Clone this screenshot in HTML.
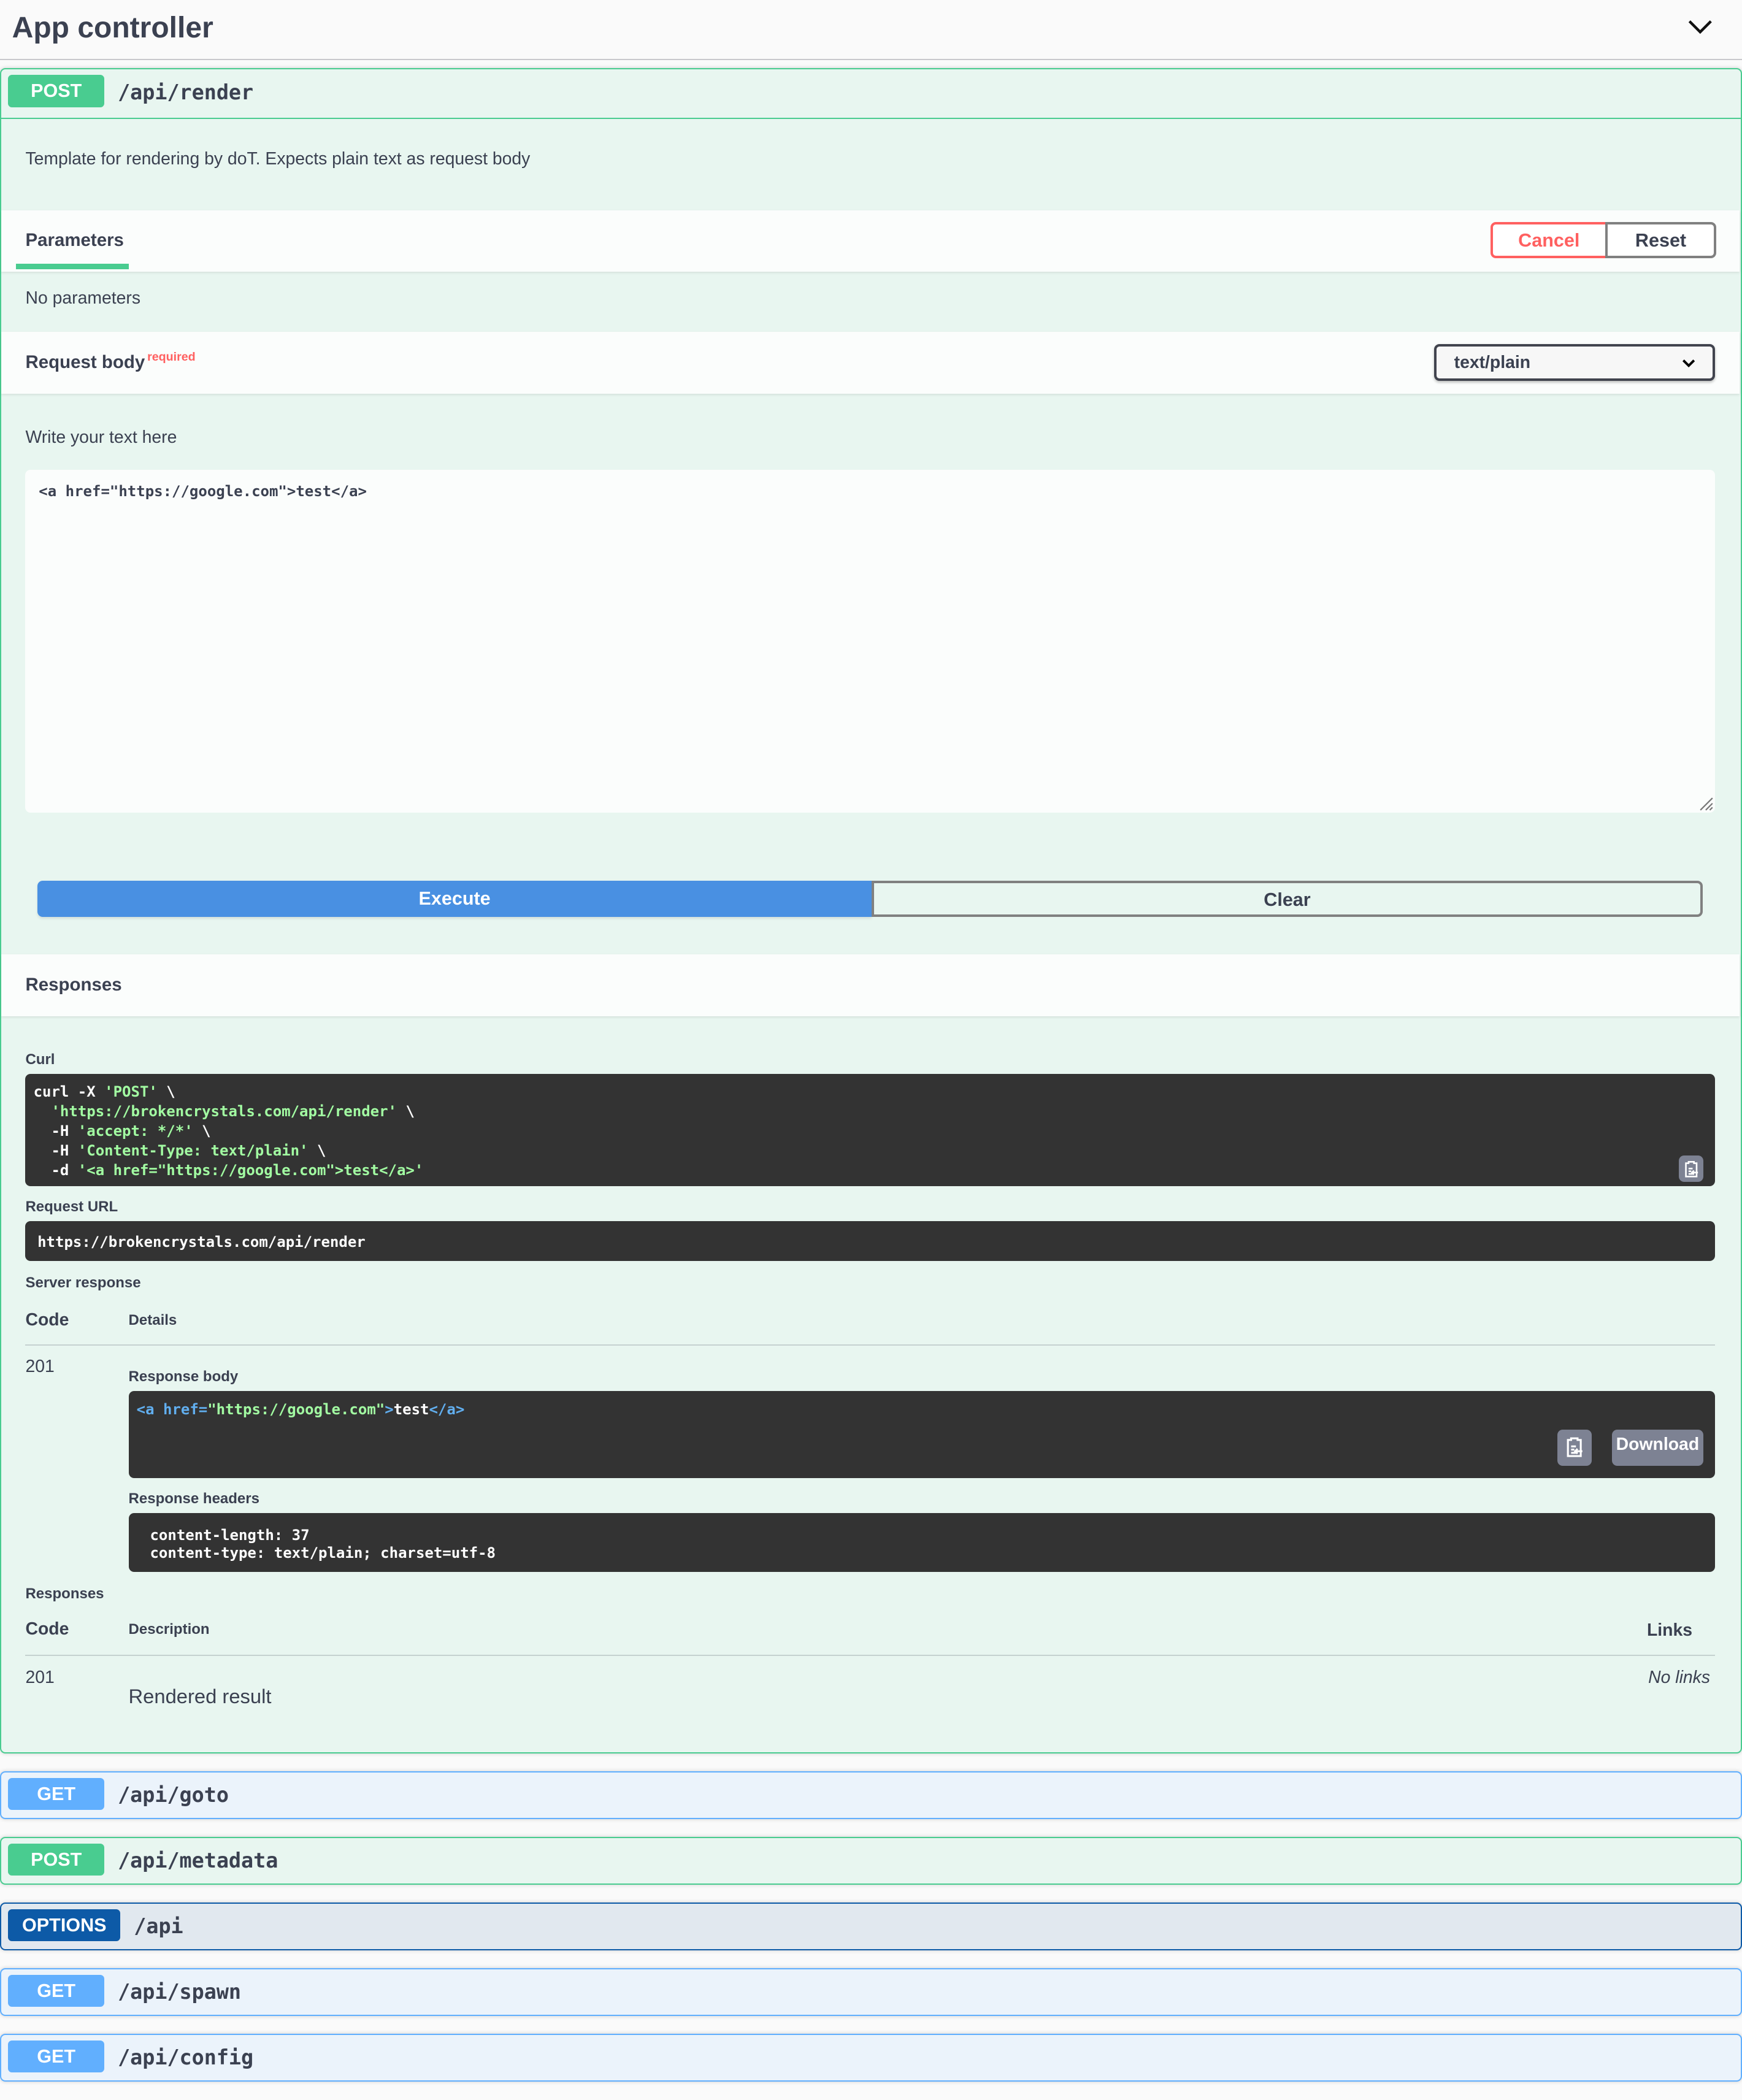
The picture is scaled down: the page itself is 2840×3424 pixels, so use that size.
<!DOCTYPE html>
<html><head><meta charset="utf-8">
<style>
html,body{margin:0;padding:0;background:#fafafa;}
body{width:2840px;height:3424px;overflow:hidden;}
#w{zoom:2.1829;width:1301px;height:1568px;position:relative;font-family:"Liberation Sans",sans-serif;color:#3b4151;}
.a{position:absolute;}
.t{position:absolute;white-space:pre;}
.mono{font-family:"DejaVu Sans Mono","Liberation Mono",monospace;}
.b{font-weight:bold;}
.badge{position:absolute;left:6px;height:24px;width:72px;border-radius:3px;color:#fff;font-weight:bold;font-size:14px;line-height:24px;text-align:center;}
.path{position:absolute;left:88px;font-family:"DejaVu Sans Mono",monospace;font-weight:bold;font-size:15.3px;color:#3b4151;}
.op{position:absolute;left:0;width:1299px;height:34px;border:1px solid;border-radius:4px;box-shadow:0 0 3px rgba(0,0,0,.19);}
.code{position:absolute;background:#333;border-radius:4px;color:#fff;font-family:"DejaVu Sans Mono",monospace;font-weight:bold;font-size:11px;}
.g{color:#a2fca2;}
.bar{position:absolute;left:1px;width:1298px;background:rgba(255,255,255,.8);box-shadow:0 1px 2px rgba(0,0,0,.1);}
</style></head><body><div id="w">
<div class="t b" style="left:9px;top:7px;font-size:22px;line-height:28px;">App controller</div>
<svg class="a" style="left:1260px;top:12px" width="20" height="16" viewBox="0 0 20 16"><path d="M2 4 L10 12 L18 4" fill="none" stroke="#111" stroke-width="2"/></svg>
<div class="a" style="left:0;top:44px;width:1301px;height:1px;background:#c8c8cc;"></div>

<div class="a" style="left:0;top:51px;width:1299px;height:1257px;border:1px solid #49cc90;border-radius:4px;background:#e8f6f0;box-shadow:0 0 3px rgba(0,0,0,.19);"></div>
<div class="a" style="left:1px;top:88px;width:1299px;height:1px;background:#49cc90;"></div>
<div class="badge" style="top:56px;background:#49cc90;">POST</div>
<div class="path" style="top:59px;line-height:20px;">/api/render</div>
<div class="t" style="left:19px;top:111px;font-size:13px;line-height:16px;">Template for rendering by doT. Expects plain text as request body</div>

<div class="bar" style="top:157px;height:46px;"></div>
<div class="t b" style="left:19px;top:172px;font-size:13.5px;line-height:16px;">Parameters</div>
<div class="a" style="left:12px;top:197px;width:84px;height:4px;background:#49cc90;"></div>
<div class="a" style="left:1113px;top:166px;width:84px;height:23px;border:2px solid #ff6060;border-radius:4px 0 0 4px;background:#fff;color:#ff6060;font-weight:bold;font-size:14px;line-height:24px;text-align:center;">Cancel</div>
<div class="a" style="left:1199px;top:166px;width:79px;height:23px;border:2px solid #808080;border-radius:0 4px 4px 0;background:#fff;font-weight:bold;font-size:14px;line-height:24px;text-align:center;">Reset</div>
<div class="t" style="left:19px;top:215px;font-size:13px;line-height:16px;">No parameters</div>

<div class="bar" style="top:248px;height:46px;"></div>
<div class="t b" style="left:19px;top:263px;font-size:13.5px;line-height:16px;">Request body</div>
<div class="t b" style="left:110px;top:262px;font-size:9px;line-height:10px;color:#ff6060;">required</div>
<div class="a" style="left:1071px;top:257px;width:206px;height:24px;border:2px solid #41444e;border-radius:4px;background:#f7f7f7;box-shadow:0 1px 2px rgba(0,0,0,.25);"></div>
<div class="t b" style="left:1086px;top:263px;font-size:13px;line-height:16px;">text/plain</div>
<svg class="a" style="left:1255px;top:266px" width="12" height="10" viewBox="0 0 12 10"><path d="M2 3 L6 7 L10 3" fill="none" stroke="#000" stroke-width="1.8"/></svg>

<div class="t" style="left:19px;top:319px;font-size:13px;line-height:16px;">Write your text here</div>
<div class="a" style="left:19px;top:351px;width:1262px;height:256px;background:#fbfdfc;border-radius:4px;"></div>
<div class="t mono b" style="left:29px;top:360px;font-size:11px;line-height:14px;">&lt;a href="https://google.com"&gt;test&lt;/a&gt;</div>
<svg class="a" style="left:1269px;top:595px" width="11" height="11" viewBox="0 0 11 11"><path d="M1 10 L10 1 M5 10 L10 5 M8 10 L10 8" stroke="#777" stroke-width="1"/></svg>

<div class="a" style="left:28px;top:658px;width:623px;height:27px;background:#4990e2;border-radius:4px 0 0 4px;color:#fff;font-weight:bold;font-size:14px;line-height:27px;text-align:center;box-shadow:0 1px 2px rgba(0,0,0,.1);">Execute</div>
<div class="a" style="left:651px;top:658px;width:617px;height:23px;border:2px solid #808080;border-radius:0 4px 4px 0;font-weight:bold;font-size:14px;line-height:25px;text-align:center;">Clear</div>

<div class="bar" style="top:713px;height:46px;"></div>
<div class="t b" style="left:19px;top:728px;font-size:13.5px;line-height:16px;">Responses</div>

<div class="t b" style="left:19px;top:785px;font-size:11px;line-height:13px;">Curl</div>
<div class="code" style="left:19px;top:802px;width:1262px;height:84px;"></div>
<div class="t mono b" style="left:25px;top:808px;font-size:11px;line-height:14.7px;color:#fff;">curl -X <span class="g">'POST'</span> \
  <span class="g">'https://brokencrystals.com/api/render'</span> \
  -H <span class="g">'accept: */*'</span> \
  -H <span class="g">'Content-Type: text/plain'</span> \
  -d <span class="g">'&lt;a href="https://google.com"&gt;test&lt;/a&gt;'</span></div>
<div class="a" style="left:1254px;top:863px;width:18px;height:20px;background:#7d8293;border-radius:4px;"></div>
<svg class="a" style="left:1256px;top:866px" width="14" height="15" viewBox="0 0 14 15"><path d="M3 3h2v-1h4v1h2v10h-8z M5 7h3 M5 9h2 M5 11h3 M12 10h-4 M9 8.5l-1.5 1.5 1.5 1.5" fill="none" stroke="#fff" stroke-width="1.2"/></svg>

<div class="t b" style="left:19px;top:895px;font-size:11px;line-height:13px;">Request URL</div>
<div class="code" style="left:19px;top:912px;width:1262px;height:30px;"></div>
<div class="t mono b" style="left:28px;top:921px;font-size:11px;line-height:14px;color:#fff;">https://brokencrystals.com/api/render</div>

<div class="t b" style="left:19px;top:952px;font-size:11px;line-height:13px;">Server response</div>
<div class="t b" style="left:19px;top:978px;font-size:13px;line-height:16px;">Code</div>
<div class="t b" style="left:96px;top:980px;font-size:11px;line-height:13px;">Details</div>
<div class="a" style="left:19px;top:1004px;width:1262px;height:1px;background:rgba(59,65,81,.2);"></div>
<div class="t" style="left:19px;top:1013px;font-size:13px;line-height:16px;">201</div>
<div class="t b" style="left:96px;top:1022px;font-size:11px;line-height:13px;">Response body</div>
<div class="code" style="left:96px;top:1039px;width:1185px;height:65px;"></div>
<div class="t mono b" style="left:102px;top:1046px;font-size:11px;line-height:14px;color:#fff;"><span style="color:#61aeee">&lt;a href=</span><span class="g">"https://google.com"</span><span style="color:#61aeee">&gt;</span>test<span style="color:#61aeee">&lt;/a&gt;</span></div>
<div class="a" style="left:1163px;top:1068px;width:26px;height:27px;background:#7d8293;border-radius:4px;"></div>
<svg class="a" style="left:1167px;top:1072px" width="18" height="18" viewBox="0 0 14 15"><path d="M3 3h2v-1h4v1h2v10h-8z M5 7h3 M5 9h2 M5 11h3 M12 10h-4 M9 8.5l-1.5 1.5 1.5 1.5" fill="none" stroke="#fff" stroke-width="1.2"/></svg>
<div class="a" style="left:1204px;top:1068px;width:68px;height:27px;background:#7d8293;border-radius:4px;color:#fff;font-weight:bold;font-size:13px;line-height:22px;text-align:center;">Download</div>

<div class="t b" style="left:96px;top:1113px;font-size:11px;line-height:13px;">Response headers</div>
<div class="code" style="left:96px;top:1130px;width:1185px;height:44px;"></div>
<div class="t mono b" style="left:112px;top:1140px;font-size:11px;line-height:13.5px;color:#fff;">content-length: 37
content-type: text/plain; charset=utf-8</div>

<div class="t b" style="left:19px;top:1184px;font-size:11px;line-height:13px;">Responses</div>
<div class="t b" style="left:19px;top:1209px;font-size:13px;line-height:16px;">Code</div>
<div class="t b" style="left:96px;top:1211px;font-size:11px;line-height:13px;">Description</div>
<div class="t b" style="left:1230px;top:1210px;font-size:13px;line-height:16px;">Links</div>
<div class="a" style="left:19px;top:1236px;width:1262px;height:1px;background:rgba(59,65,81,.2);"></div>
<div class="t" style="left:19px;top:1245px;font-size:13px;line-height:16px;">201</div>
<div class="t" style="left:96px;top:1258px;font-size:15px;line-height:18px;">Rendered result</div>
<div class="t" style="left:1231px;top:1245px;font-size:13px;line-height:16px;font-style:italic;">No links</div>

<div class="op" style="top:1323px;border-color:#61affe;background:#ebf3fb;"></div>
<div class="badge" style="top:1328px;background:#61affe;">GET</div>
<div class="path" style="top:1331px;line-height:20px;">/api/goto</div>

<div class="op" style="top:1372px;border-color:#49cc90;background:#e8f6f0;"></div>
<div class="badge" style="top:1377px;background:#49cc90;">POST</div>
<div class="path" style="top:1380px;line-height:20px;">/api/metadata</div>

<div class="op" style="top:1421px;border-color:#0d5aa7;background:#e1e8ef;"></div>
<div class="badge" style="top:1426px;width:84px;background:#0d5aa7;">OPTIONS</div>
<div class="path" style="left:100px;top:1429px;line-height:20px;">/api</div>

<div class="op" style="top:1470px;border-color:#61affe;background:#ebf3fb;"></div>
<div class="badge" style="top:1475px;background:#61affe;">GET</div>
<div class="path" style="top:1478px;line-height:20px;">/api/spawn</div>

<div class="op" style="top:1519px;border-color:#61affe;background:#ebf3fb;"></div>
<div class="badge" style="top:1524px;background:#61affe;">GET</div>
<div class="path" style="top:1527px;line-height:20px;">/api/config</div>
</div></body></html>
